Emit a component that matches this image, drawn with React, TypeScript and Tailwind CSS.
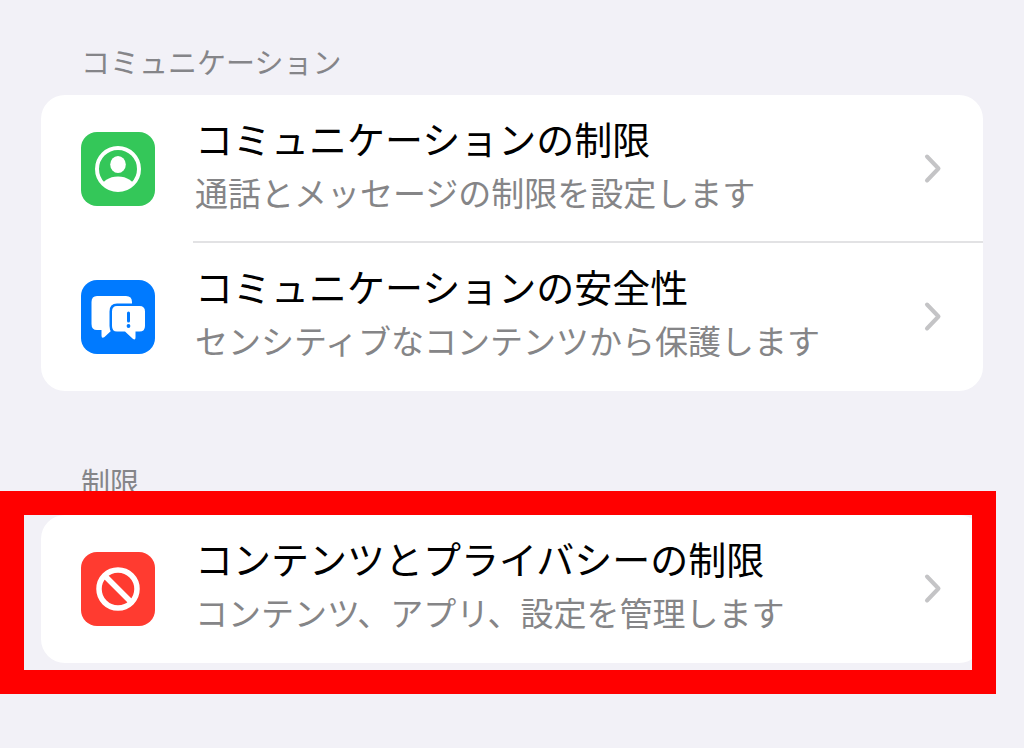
import React from 'react';
import { clsx } from 'clsx';

interface SettingItem {
  title: string;
  description: string;
  color: string;
  icon: React.ReactNode;
}

function PersonIcon() {
  return (
    <svg viewBox="0 0 74 74" className="w-full h-full" aria-hidden="true">
      <defs>
        <clipPath id="person-circle">
          <circle cx="37" cy="37" r="21" />
        </clipPath>
      </defs>
      <circle cx="37" cy="37" r="21" fill="none" stroke="white" strokeWidth="4" />
      <ellipse cx="37" cy="32.5" rx="7.8" ry="8.6" fill="white" />
      <ellipse cx="37" cy="56" rx="16.5" ry="11.5" fill="white" clipPath="url(#person-circle)" />
    </svg>
  );
}

function BubblesIcon() {
  return (
    <svg viewBox="0 0 74 74" className="w-full h-full" aria-hidden="true">
      <path
        d="M16 16H45Q51 16 51 22V44Q51 50 45 50H31L23.500 57Q20.500 59 20.500 55.500V50H16Q10.500 50 10.500 44V22Q10.500 16 16 16Z"
        fill="white"
      />
      <path
        d="M36 26H58.500Q64 26 64 31.500V46Q64 51.500 58.500 51.500H54.500V57.500Q54.500 61 51.500 58.500L44 51.500H36Q31 51.500 31 46V31.500Q31 26 36 26Z"
        fill="white"
        stroke="#007aff"
        strokeWidth="5"
        paintOrder="stroke"
      />
      <path d="M47.500 33V41" stroke="#007aff" strokeWidth="3" strokeLinecap="round" />
      <circle cx="47.500" cy="46" r="1.900" fill="#007aff" />
    </svg>
  );
}

function BlockedIcon() {
  return (
    <svg viewBox="0 0 74 74" className="w-full h-full" aria-hidden="true">
      <g fill="none" stroke="white" strokeWidth="5.5">
        <circle cx="37" cy="37" r="19" />
        <path d="M23.500 23.500L50.500 50.500" />
      </g>
    </svg>
  );
}

function Chevron() {
  return (
    <svg viewBox="0 0 20 32" className="w-5 h-8 shrink-0" aria-hidden="true">
      <path
        d="M4 4.500L15.500 16.500L4 28.500"
        fill="none"
        stroke="#c4c4c6"
        strokeWidth="4"
        strokeLinecap="round"
        strokeLinejoin="round"
      />
    </svg>
  );
}

const communicationItems: SettingItem[] = [
  {
    title: 'コミュニケーションの制限',
    description: '通話とメッセージの制限を設定します',
    color: 'bg-[#34c759]',
    icon: <PersonIcon />,
  },
  {
    title: 'コミュニケーションの安全性',
    description: 'センシティブなコンテンツから保護します',
    color: 'bg-[#007aff]',
    icon: <BubblesIcon />,
  },
];

const restrictionItems: SettingItem[] = [
  {
    title: 'コンテンツとプライバシーの制限',
    description: 'コンテンツ、アプリ、設定を管理します',
    color: 'bg-[#ff3b30]',
    icon: <BlockedIcon />,
  },
];

function SettingRow({ item, divided }: { item: SettingItem; divided: boolean }) {
  return (
    <li>
      <button type="button" className="flex w-full items-center pl-10 text-left">
        <span className={clsx('h-[74px] w-[74px] shrink-0 overflow-hidden rounded-2xl', item.color)}>
          {item.icon}
        </span>
        <span
          className={clsx(
            'ml-[38px] flex h-[148px] min-w-0 flex-1 items-center border-b-2 pl-0.5 pr-10',
            divided ? 'border-[#e2e2e4]' : 'border-transparent'
          )}
        >
          <span className="min-w-0 flex-1 pb-1.5">
            <span className="mb-0.5 block text-[38px] leading-[52px] text-black">{item.title}</span>
            <span className="block text-[33px] leading-[52px] text-[#858587]">{item.description}</span>
          </span>
          <Chevron />
        </span>
      </button>
    </li>
  );
}

interface SettingSectionProps {
  heading: string;
  items: SettingItem[];
  highlighted?: boolean;
}

function SettingSection({ heading, items, highlighted = false }: SettingSectionProps) {
  return (
    <section>
      <h2 className="mb-3.5 pl-10 text-[29px] leading-10 text-[#858589]">{heading}</h2>
      <div className="relative">
        <ul className="overflow-hidden rounded-3xl bg-white">
          {items.map((item, index) => (
            <SettingRow key={item.title} item={item} divided={index < items.length - 1} />
          ))}
        </ul>
        {/* Callout frame drawn over the card */}
        {highlighted && (
          <div className="pointer-events-none absolute -top-6 -right-[13px] -bottom-[31px] -left-[41px] border-24 border-[#ff0000]"></div>
        )}
      </div>
    </section>
  );
}

export default function App() {
  return (
    <main className="flex min-h-screen flex-col gap-[70px] bg-[#f2f1f7] px-[41px] pt-[41px] pb-20 font-['Noto_Sans_CJK_JP',sans-serif]">
      <SettingSection heading="コミュニケーション" items={communicationItems} />
      <SettingSection heading="制限" items={restrictionItems} highlighted />
    </main>
  );
}
